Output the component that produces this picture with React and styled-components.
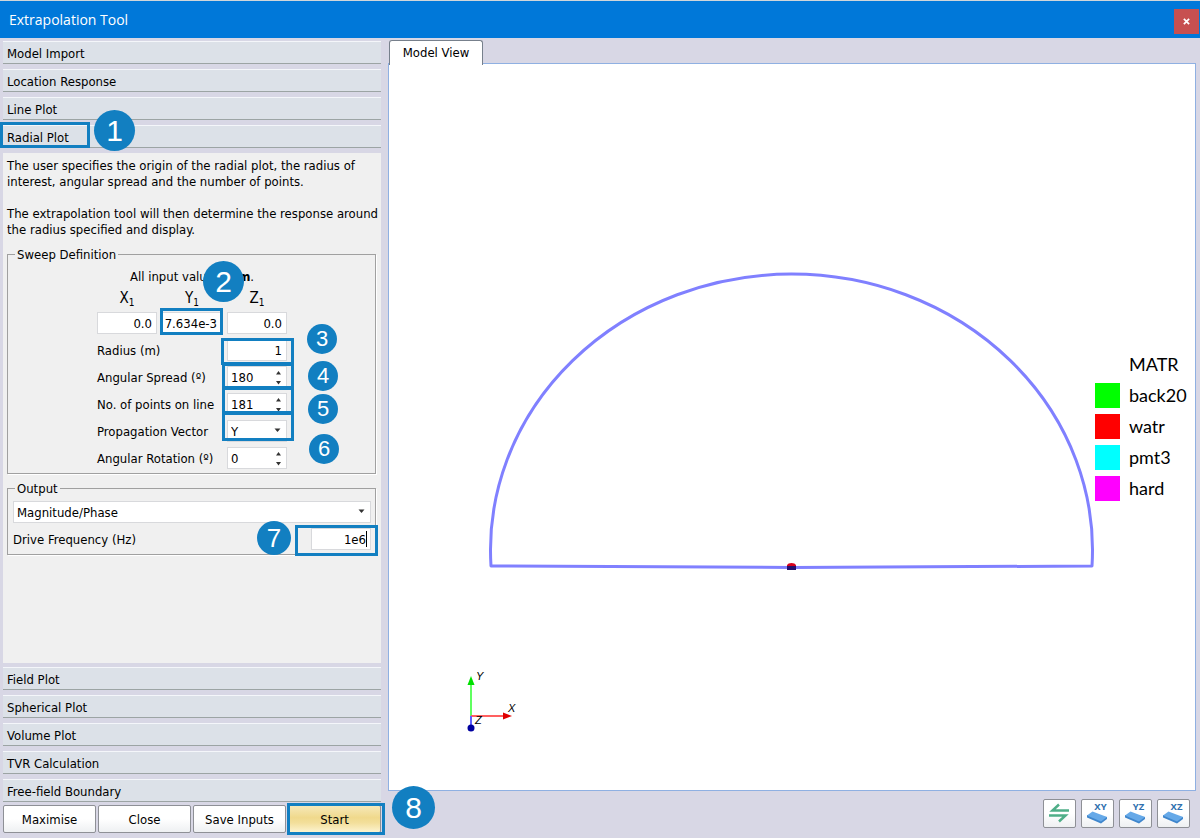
import React from "react";
import styled, { createGlobalStyle, css } from "styled-components";

const Global = createGlobalStyle`
  *, *::before, *::after { box-sizing: border-box; }
  html, body { margin: 0; }
  body, button, input, select {
    font-family: "DejaVu Sans Condensed", "Noto Sans", sans-serif;
    font-size: 13px;
    line-height: 16px;
    color: #000;
  }
  p { margin: 0; }
`;

const Window = styled.div`
  display: flex;
  flex-direction: column;
  min-height: 100vh;
  background: #d8d7e5;
`;

const TitleBar = styled.header`
  display: flex;
  justify-content: space-between;
  align-items: center;
  height: 38px;
  padding: 0 1px 0 9px;
  border-top: 1px solid #d0d6da;
  background: #0078d9;
`;

const Title = styled.h1`
  margin: 0;
  font: 400 14px/20px "Open Sans", sans-serif;
  color: #fff;
`;

const CloseButton = styled.button`
  display: grid;
  place-items: center;
  align-self: flex-end;
  width: 25px;
  height: 25px;
  margin-bottom: 4px;
  padding: 0;
  border: 0;
  background: #c75050;
`;

const Body = styled.div`
  display: flex;
  flex: 1;
  gap: 7px;
`;

const Sidebar = styled.aside`
  display: flex;
  flex-direction: column;
  flex: none;
  width: 381px;
  padding: 3px 0 5px 3px;
`;

const Sections = styled.div`
  display: flex;
  flex-direction: column;
  gap: 5px;
`;

const SectionHeader = styled.button`
  position: relative;
  height: 23px;
  padding: 2px 4px 0;
  border: 0;
  border-top: 1px solid #f4f6fa;
  border-bottom: 1px solid #9ca4a4;
  background: #dce1e8;
  text-align: left;
`;

const Panel = styled.section`
  display: flex;
  flex-direction: column;
  flex: 1;
  margin: 5px 0 4px;
  padding: 5px 5px 8px 4px;
  background: #f0f0f0;
`;

const Description = styled.div`
  display: grid;
  gap: 16px;
  margin-bottom: 8px;
  white-space: nowrap;
`;

const Group = styled.fieldset`
  min-width: 0;
  margin: 0 0 6px;
  padding: ${(p) => p.$top}px 4px 4px 5px;
  border: 1px solid #a0a0a0;
  box-shadow: 1px 1px 0 #fff;
`;

const GroupTitle = styled.legend`
  height: 16px;
  margin-left: 2px;
  padding: 0 2px;
  line-height: 18px;
`;

const SweepGrid = styled.div`
  position: relative;
  display: grid;
  grid-template-columns: repeat(3, 60px);
  gap: 5px;
  width: 190px;
  margin: 0 auto;
`;

const Note = styled.p`
  grid-column: 1 / -1;
  text-align: center;
  white-space: nowrap;
`;

const AxisLabel = styled.label`
  height: 17px;
  font-size: 15px;
  line-height: 17px;
  text-align: center;
  sub { font-size: 10px; line-height: 0; vertical-align: -3px; }
`;

const FieldLabel = styled.label`
  grid-column: span 2;
  height: 22px;
  line-height: 24px;
  white-space: nowrap;
`;

const fieldLook = css`
  display: block;
  width: 100%;
  height: 22px;
  border: 1px solid #d8d9dc;
  border-radius: 0;
  background: #fff;
  outline: 0;
  appearance: none;
`;

const ValueInput = styled.input`
  ${fieldLook}
  padding: 1px 4px 0 0;
  text-align: right;
`;

const SpinInput = styled.input`
  ${fieldLook}
  padding: 1px 16px 0 3px;
  appearance: textfield;
  &::-webkit-inner-spin-button { display: none; }
`;

const Dropdown = styled.select`
  ${fieldLook}
  padding: 1px 16px 0 3px;
`;

const Control = styled.div`
  position: relative;
  width: ${(p) => (p.$full ? "100%" : "60px")};
`;

const Arrows = styled.svg`
  position: absolute;
  top: 0;
  right: 4px;
  pointer-events: none;
`;

const Caret = styled.span`
  position: absolute;
  top: 3px;
  right: 4px;
  width: 1px;
  height: 16px;
  background: #000;
`;

const DriveRow = styled.div`
  position: relative;
  display: flex;
  justify-content: space-between;
  margin-top: 5px;
`;

const Actions = styled.div`
  display: grid;
  grid-template-columns: repeat(4, 1fr);
  gap: 2px;
  margin-top: 3px;
`;

const ActionButton = styled.button`
  position: relative;
  height: 28px;
  padding: 1px 0 0;
  border: 1px solid #8e9096;
  border-radius: 2px;
  white-space: nowrap;
  background: ${(p) =>
    p.$primary
      ? "linear-gradient(#f6e8b8, #f0d98c 45%, #f3df9b 65%, #fcf3cf)"
      : "linear-gradient(#fff 50%, #eef0f2)"};
`;

const Outline = styled.span`
  position: absolute;
  left: ${(p) => p.$x}px;
  top: ${(p) => p.$y}px;
  width: ${(p) => p.$w}px;
  height: ${(p) => p.$h}px;
  border: 3px solid #127fc1;
  pointer-events: none;
`;

const badgeText = { 30: 22, 34: 26, 41: 30, 43: 30 };

const Badge = styled.span`
  position: absolute;
  z-index: 2;
  left: ${(p) => p.$x}px;
  top: ${(p) => p.$y}px;
  width: ${(p) => p.$size}px;
  height: ${(p) => p.$size}px;
  border-radius: 50%;
  background: #127fc1;
  color: #fff;
  font-family: "Liberation Sans", Arial, sans-serif;
  font-size: ${(p) => badgeText[p.$size]}px;
  line-height: ${(p) => p.$size}px;
  text-align: center;
  pointer-events: none;
`;

const Main = styled.main`
  display: flex;
  flex-direction: column;
  flex: 1;
  min-width: 0;
  padding: 2px 4px 10px 0;
`;

const Tab = styled.button`
  align-self: flex-start;
  position: relative;
  z-index: 1;
  width: 94px;
  height: 25px;
  margin: 0 0 -2px 1px;
  padding: 0;
  border: 1px solid #77808c;
  border-bottom: 0;
  border-radius: 3px 3px 0 0;
  background: #fff;
`;

const View = styled.div`
  position: relative;
  display: flex;
  flex: 1;
  min-height: 500px;
  border: 1px solid #8fb0e2;
  background: #fff;
`;

const Scene = styled.svg`
  flex: 1;
  min-width: 0;
  width: 100%;
`;

const Legend = styled.ul`
  position: absolute;
  top: calc(50% - 78px);
  right: 6px;
  width: 94px;
  margin: 0;
  padding: 0;
  list-style: none;
  font: 400 18px/31px Lato, sans-serif;
`;

const LegendItem = styled.li`
  display: grid;
  grid-template-columns: 25px 1fr;
  gap: 9px;
  align-items: center;
  height: 31px;
  white-space: nowrap;
  &::before {
    content: "";
    height: 25px;
    background: ${(p) => p.$color || "transparent"};
  }
`;

const ViewTools = styled.div`
  display: flex;
  justify-content: flex-end;
  gap: 5px;
  margin-top: 8px;
  padding-right: 6px;
`;

const ToolButton = styled.button`
  width: 33px;
  height: 29px;
  padding: 0;
  border: 1px solid #8e9096;
  border-radius: 2px;
  background: linear-gradient(#fff 50%, #eef0f2);
  svg { display: block; }
`;

const SpinArrows = () => (
  <Arrows width="8" height="22" viewBox="0 0 8 22" fill="#333" aria-hidden="true">
    <path d="M1 8.500 3.500 5 6 8.500zM1 15h5L3.500 18.500z" />
  </Arrows>
);

const DropArrow = () => (
  <Arrows width="10" height="22" viewBox="0 0 10 22" fill="#333" aria-hidden="true">
    <path d="M1.500 8.500h6L4.500 12z" />
  </Arrows>
);

const Spin = ({ id, label, value }) => (
  <>
    <FieldLabel htmlFor={id}>{label}</FieldLabel>
    <Control>
      <SpinInput id={id} type="number" defaultValue={value} />
      <SpinArrows />
    </Control>
  </>
);

const PlaneTool = ({ plane }) => (
  <ToolButton aria-label={`${plane} view`}>
    <svg width="31" height="27" viewBox="0 0 31 27">
      <text x="18.500" y="10" textAnchor="middle" fill="#2f6fae" fontFamily="Noto Sans" fontSize="9.500" fontWeight="700">
        {plane}
      </text>
      <path d="M5 15v2.500l14 6 6-4.500v-2z" fill="#3f86cc" />
      <path d="M5 15.500l5.500-4L25 17l-6 4.500z" fill="#66a9e8" />
    </svg>
  </ToolButton>
);

const materials = [
  ["MATR"],
  ["back20", "#00ff00"],
  ["watr", "#ff0000"],
  ["pmt3", "#00ffff"],
  ["hard", "#ff00ff"],
];

export default function App() {
  return (
    <Window>
      <Global />
      <TitleBar>
        <Title>Extrapolation Tool</Title>
        <CloseButton aria-label="Close window">
          <svg width="7" height="7" viewBox="0 0 8 8" stroke="#fff" strokeWidth="2">
            <path d="M1 1l6 6M7 1 1 7" />
          </svg>
        </CloseButton>
      </TitleBar>
      <Body>
        <Sidebar>
          <Sections>
            <SectionHeader>Model Import</SectionHeader>
            <SectionHeader>Location Response</SectionHeader>
            <SectionHeader>Line Plot</SectionHeader>
            <SectionHeader aria-expanded="true">
              Radial Plot
              <Outline $x={-3} $y={-4} $w={90} $h={26} />
              <Badge $x={91} $y={-16} $size={41}>1</Badge>
            </SectionHeader>
          </Sections>
          <Panel>
            <Description>
              <p>
                The user specifies the origin of the radial plot, the radius of
                <br />
                interest, angular spread and the number of points.
              </p>
              <p>
                The extrapolation tool will then determine the response around
                <br />
                the radius specified and display.
              </p>
            </Description>
            <Group $top={7}>
              <GroupTitle>Sweep Definition</GroupTitle>
              <SweepGrid>
                <Note>All input values in <b>m</b>.</Note>
                <AxisLabel htmlFor="x1">X<sub>1</sub></AxisLabel>
                <AxisLabel htmlFor="y1">Y<sub>1</sub></AxisLabel>
                <AxisLabel htmlFor="z1">Z<sub>1</sub></AxisLabel>
                <ValueInput id="x1" defaultValue="0.0" />
                <ValueInput id="y1" defaultValue="7.634e-3" />
                <ValueInput id="z1" defaultValue="0.0" />
                <FieldLabel htmlFor="radius">Radius (m)</FieldLabel>
                <ValueInput id="radius" defaultValue="1" />
                <Spin id="spread" label="Angular Spread (º)" value="180" />
                <Spin id="points" label="No. of points on line" value="181" />
                <FieldLabel htmlFor="vector">Propagation Vector</FieldLabel>
                <Control>
                  <Dropdown id="vector" defaultValue="Y">
                    <option>X</option>
                    <option>Y</option>
                    <option>Z</option>
                  </Dropdown>
                  <DropArrow />
                </Control>
                <Spin id="rotation" label="Angular Rotation (º)" value="0" />
                <Outline $x={63} $y={39} $w={63} $h={27} />
                <Outline $x={124} $y={69} $w={73} $h={27} />
                <Outline $x={125} $y={94} $w={72} $h={26} />
                <Outline $x={125} $y={118} $w={72} $h={27} />
                <Outline $x={125} $y={143} $w={72} $h={29} />
                <Badge $x={106} $y={-8} $size={41}>2</Badge>
                <Badge $x={210} $y={55} $size={30}>3</Badge>
                <Badge $x={211} $y={92} $size={30}>4</Badge>
                <Badge $x={211} $y={125} $size={30}>5</Badge>
                <Badge $x={212} $y={165} $size={30}>6</Badge>
              </SweepGrid>
            </Group>
            <Group $top={5}>
              <GroupTitle>Output</GroupTitle>
              <Control $full>
                <Dropdown aria-label="Output format">
                  <option>Magnitude/Phase</option>
                </Dropdown>
                <DropArrow />
              </Control>
              <DriveRow>
                <FieldLabel htmlFor="drive">Drive Frequency (Hz)</FieldLabel>
                <Control>
                  <ValueInput id="drive" defaultValue="1e6" />
                  <Caret />
                </Control>
                <Outline $x={282} $y={-3} $w={83} $h={31} />
                <Badge $x={244} $y={-7} $size={34}>7</Badge>
              </DriveRow>
            </Group>
          </Panel>
          <Sections>
            <SectionHeader>Field Plot</SectionHeader>
            <SectionHeader>Spherical Plot</SectionHeader>
            <SectionHeader>Volume Plot</SectionHeader>
            <SectionHeader>TVR Calculation</SectionHeader>
            <SectionHeader>Free-field Boundary</SectionHeader>
          </Sections>
          <Actions>
            <ActionButton>Maximise</ActionButton>
            <ActionButton>Close</ActionButton>
            <ActionButton>Save Inputs</ActionButton>
            <ActionButton $primary>
              Start
              <Outline $x={-2} $y={-3} $w={98} $h={32} />
              <Badge $x={103} $y={-20} $size={43}>8</Badge>
            </ActionButton>
          </Actions>
        </Sidebar>
        <Main>
          <Tab>Model View</Tab>
          <View>
            <Scene viewBox="-1 -1 806 726" role="img" aria-label="Radial plot model">
              <path
                d="M101 501A301 276 0 1 1 702 501L402 502.500Z"
                fill="none"
                stroke="#8080ff"
                strokeWidth="3"
                strokeLinejoin="round"
              />
              <path d="M397 502v-2q1-2 4.500-2t4.500 2v2z" fill="#d8001c" />
              <path d="M397 501h9v4h-9z" fill="#25106c" />
              <path d="M81 651v-32" stroke="#60ff60" strokeWidth="2" />
              <path d="M77.500 620 81 611l3.500 9z" fill="#00e000" />
              <path d="M81 651h33" stroke="#ff6060" strokeWidth="2" />
              <path d="M113 647.500l9 3.500-9 3.500z" fill="#e00000" />
              <path d="M81 651v9" stroke="#6060ff" strokeWidth="2" />
              <circle cx="81" cy="663" r="3.500" fill="#0000a0" />
              <g fontFamily="Liberation Sans" fontSize="11" fontStyle="italic">
                <text x="86" y="615">Y</text>
                <text x="118" y="647">X</text>
                <text x="85" y="659">Z</text>
              </g>
            </Scene>
            <Legend>
              {materials.map(([name, color]) => (
                <LegendItem key={name} $color={color}>{name}</LegendItem>
              ))}
            </Legend>
          </View>
          <ViewTools>
            <ToolButton aria-label="Flip view">
              <svg width="31" height="27" viewBox="0 0 31 27" fill="none" stroke="#4fae88" strokeWidth="2.500">
                <path d="M25 10.500H8.500L15 4.500M5 15.500h16.500L15 21.500" />
              </svg>
            </ToolButton>
            <PlaneTool plane="XY" />
            <PlaneTool plane="YZ" />
            <PlaneTool plane="XZ" />
          </ViewTools>
        </Main>
      </Body>
    </Window>
  );
}
